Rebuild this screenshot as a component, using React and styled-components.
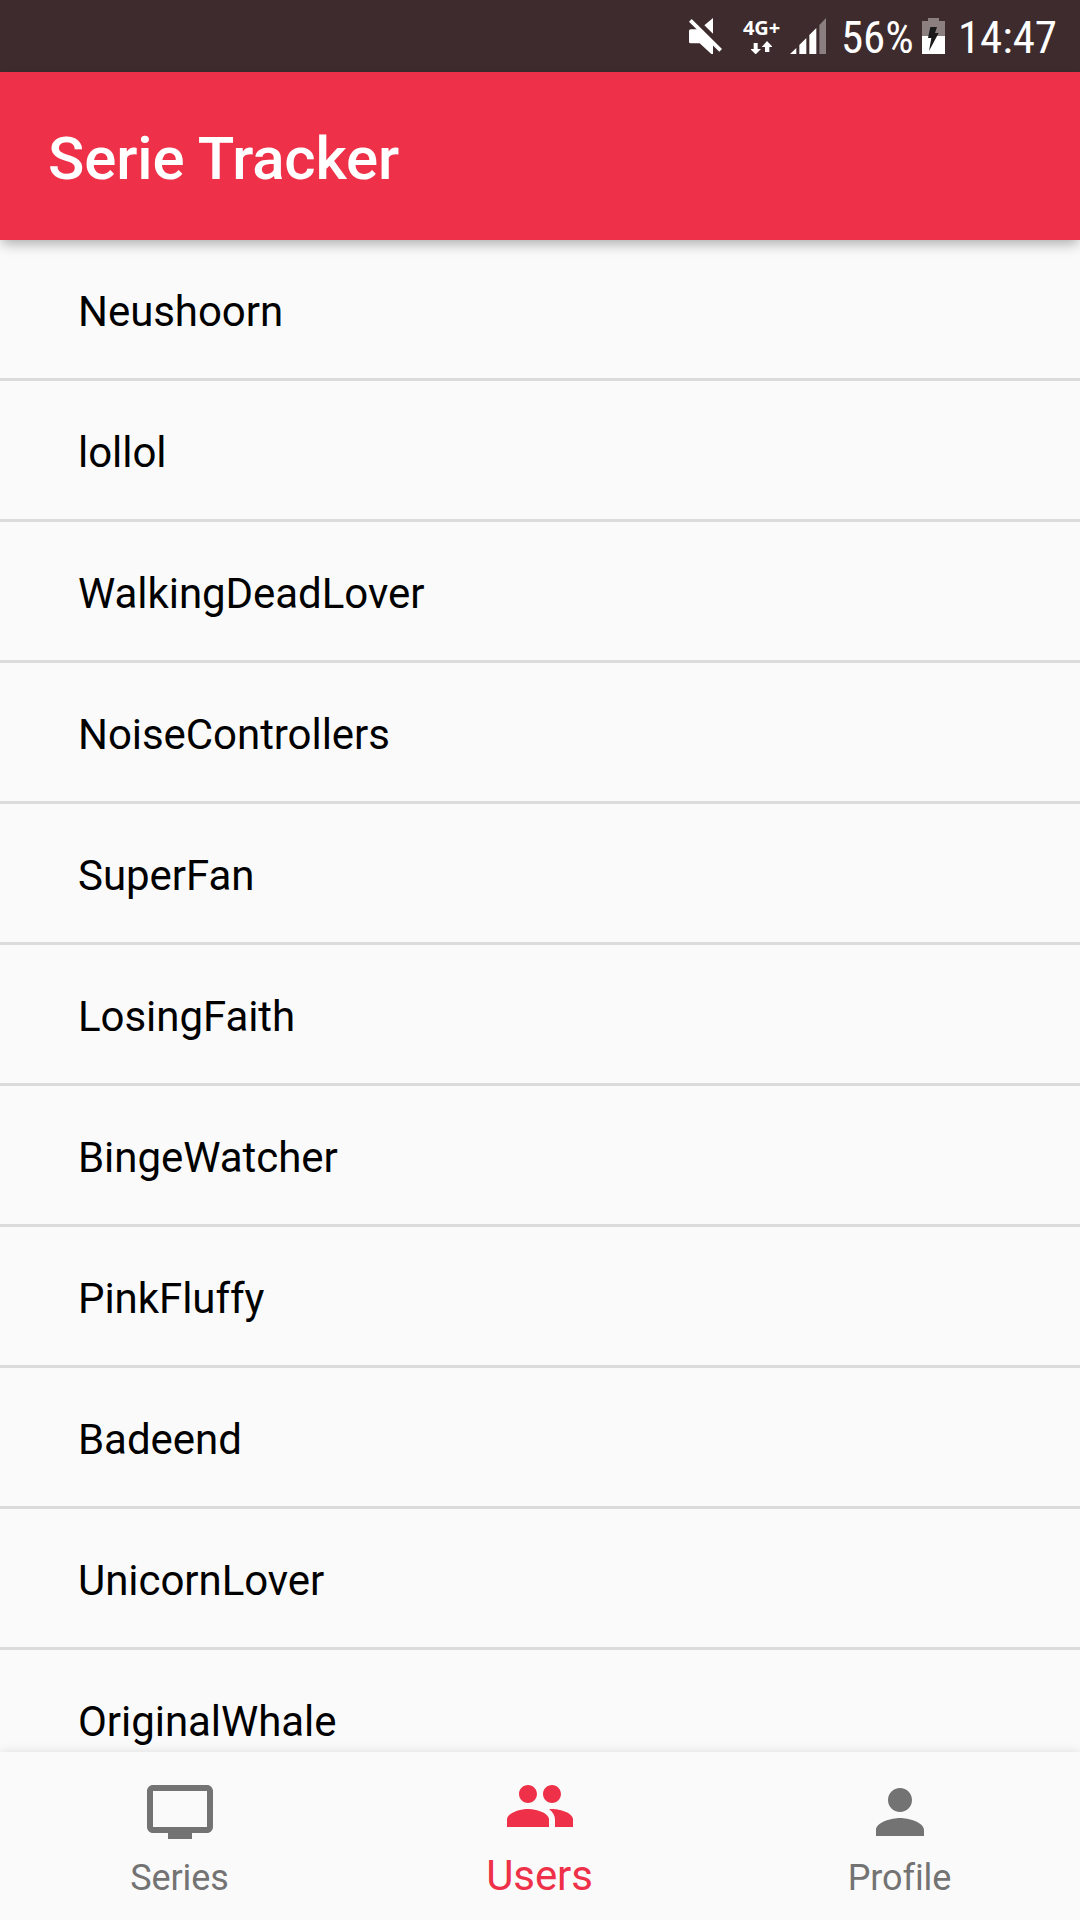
import React from 'react';
import styled, { createGlobalStyle } from 'styled-components';

const GlobalStyle = createGlobalStyle`
  * { box-sizing: border-box; }
  body { margin: 0; background: #fafafa; font-family: Roboto, sans-serif; }
`;

const Screen = styled.div`
  display: flex;
  flex-direction: column;
  width: 1080px;
  height: 1920px;
  overflow: hidden;
  background: #fafafa;
`;

const StatusBar = styled.div`
  display: flex;
  flex: none;
  justify-content: flex-end;
  height: 72px;
  padding: 18px 25px 0 0;
  background: #3e2b2d;
  color: #fff;
`;

const StatusIcon = styled.svg`
  display: block;
  flex: none;
  width: ${(p) => p.$width}px;
  height: 36px;
  margin-right: ${(p) => p.$gap}px;
`;

const Network = styled.div`
  display: flex;
  flex-direction: column;
  align-items: center;
  width: 39px;
  height: 36px;
  margin-right: 8px;
`;

const NetworkLabel = styled.span`
  font: 700 20px/20px 'Open Sans', sans-serif;
  letter-spacing: -0.2px;
  height: 23px;
`;

const Arrows = styled.svg`
  display: block;
  width: 21px;
  height: 13px;
`;

const StatusText = styled.span`
  width: ${(p) => p.$width}px;
  margin-right: ${(p) => p.$gap}px;
  font: 400 45px/40px 'Roboto Condensed', Roboto, sans-serif;
  font-stretch: condensed;
  letter-spacing: -0.1px;
  white-space: nowrap;
`;

const Header = styled.header`
  position: relative;
  z-index: 1;
  display: flex;
  flex: none;
  align-items: center;
  height: 168px;
  padding: 5px 48px 0;
  background: #ee3048;
  box-shadow: 0 6px 12px -2px rgba(0, 0, 0, 0.31);
`;

const Title = styled.h1`
  margin: 0;
  color: #fff;
  font-size: 60px;
  font-weight: 500;
  line-height: 72px;
  letter-spacing: -0.14px;
`;

const UserList = styled.ul`
  flex: 1;
  min-height: 0;
  margin: 0;
  padding: 0;
  overflow: hidden;
  list-style: none;
`;

const UserRow = styled.li`
  display: flex;
  align-items: center;
  height: 141px;
  padding: 6px 78px 0;
  border-bottom: 3px solid #dbdbdb;
  color: #000;
  font-size: 42px;
  line-height: 50px;
  letter-spacing: -0.05px;
`;

const TabBar = styled.nav`
  position: relative;
  z-index: 1;
  display: flex;
  flex: none;
  height: 168px;
  background: #fafafa;
  box-shadow: 0 0 10px rgba(0, 0, 0, 0.12);
`;

const Tab = styled.div`
  display: flex;
  flex: 1;
  flex-direction: column;
  align-items: center;
  justify-content: space-between;
  padding: ${(p) => (p.$active ? '18px 0 19px' : '24px 0 21px')};
  color: ${(p) => (p.$active ? '#ee3048' : '#737373')};
  font-size: ${(p) => (p.$active ? 42 : 36)}px;
  line-height: ${(p) => (p.$active ? 50 : 42)}px;
`;

const TabIcon = styled.svg`
  display: block;
  width: 72px;
  height: 72px;
  fill: currentColor;
`;

const TabLabel = styled.span`
  margin-right: 1px;
  letter-spacing: -0.1px;
`;

const users = [
  'Neushoorn',
  'lollol',
  'WalkingDeadLover',
  'NoiseControllers',
  'SuperFan',
  'LosingFaith',
  'BingeWatcher',
  'PinkFluffy',
  'Badeend',
  'UnicornLover',
  'OriginalWhale',
];

const tabs = [
  {
    label: 'Series',
    path: 'M21 3H3c-1.11 0-2 .89-2 2v12c0 1.1.89 2 2 2h5v2h8v-2h5c1.1 0 1.99-.9 1.99-2L23 5c0-1.11-.9-2-2-2zm0 14H3V5h18v12z',
  },
  {
    label: 'Users',
    active: true,
    path: 'M16 11c1.66 0 2.99-1.34 2.99-3S17.66 5 16 5c-1.66 0-3 1.34-3 3s1.34 3 3 3zm-8 0c1.66 0 2.99-1.34 2.99-3S9.66 5 8 5C6.34 5 5 6.34 5 8s1.34 3 3 3zm0 2c-2.33 0-7 1.17-7 3.5V19h14v-2.5c0-2.33-4.67-3.5-7-3.5zm8 0c-.29 0-.62.02-.97.05 1.16.84 1.97 1.97 1.97 3.45V19h6v-2.5c0-2.33-4.67-3.5-7-3.5z',
  },
  {
    label: 'Profile',
    path: 'M12 12c2.21 0 4-1.79 4-4s-1.79-4-4-4-4 1.79-4 4 1.79 4 4 4zm0 2c-2.67 0-8 1.34-8 4v2h16v-2c0-2.66-5.33-4-8-4z',
  },
];

export default function App() {
  return (
    <Screen>
      <GlobalStyle />
      <StatusBar>
        <StatusIcon $width={35} $gap={20} viewBox="-3 0 105 108" fill="#fff">
          <path d="M75 0V47L49 22Z" />
          <path d="M8 34H30L75 78V108H70L35 76H8Q3 76 3 71V39Q3 34 8 34Z" />
          <path d="M3 11L11 3L102 93L94 101Z" />
        </StatusIcon>
        <Network>
          <NetworkLabel>4G+</NetworkLabel>
          <Arrows viewBox="0 0 63 39" fill="#fff">
            <path d="M8 6H20V24H30L14 40L-2 24H8Z" />
            <path d="M42 33H55V18H65L48 0L32 18H42Z" />
          </Arrows>
        </Network>
        <StatusIcon $width={37} $gap={15} viewBox="-3 0 111 108" fill="#fff">
          <path d="M0 108L19 90V108Z" />
          <path d="M28 108V81L49 60V108Z" />
          <path d="M58 108V51L79 30V108Z" />
          <path d="M88 108V21L108 0V108Z" fill="#8b7f80" />
        </StatusIcon>
        <StatusText $width={71} $gap={10}>56%</StatusText>
        <StatusIcon $width={23} $gap={13} viewBox="0 0 69 108">
          <path d="M18 0H51V9H69V54H0V9H18Z" fill="#8b7f80" />
          <path d="M0 54H69V108H0Z" fill="#fff" />
          <path d="M25 27H45L39 45H50L21 99L28 60H18Z" fill="#1a1a1a" />
        </StatusIcon>
        <StatusText $width={97} $gap={0}>14:47</StatusText>
      </StatusBar>
      <Header>
        <Title>Serie Tracker</Title>
      </Header>
      <UserList>
        {users.map((name) => (
          <UserRow key={name}>{name}</UserRow>
        ))}
      </UserList>
      <TabBar>
        {tabs.map((tab) => (
          <Tab key={tab.label} $active={tab.active}>
            <TabIcon viewBox="0 0 24 24">
              <path d={tab.path} />
            </TabIcon>
            <TabLabel>{tab.label}</TabLabel>
          </Tab>
        ))}
      </TabBar>
    </Screen>
  );
}
